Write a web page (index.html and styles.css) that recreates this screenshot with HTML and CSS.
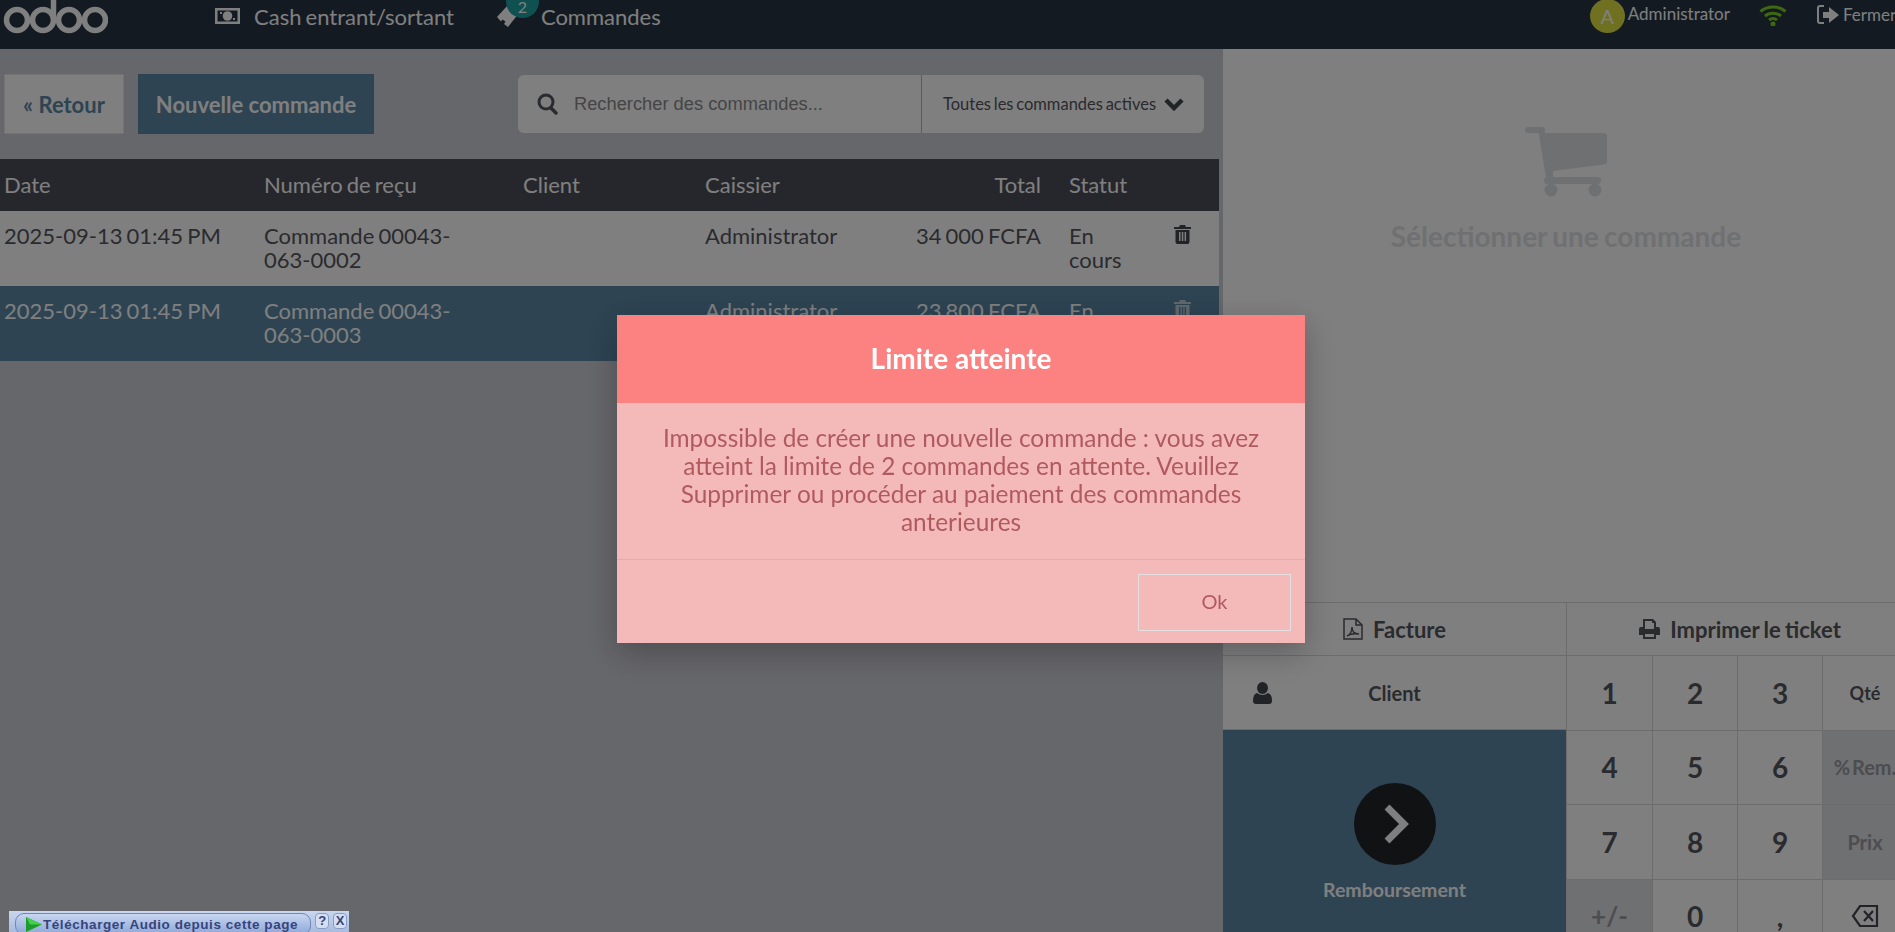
FILE: index.html
```html
<!DOCTYPE html>
<html lang="fr">
<head>
    <meta charset="UTF-8">
    <title>Point de vente</title>
    <link rel="stylesheet" href="styles.css">
</head>
<body>
    <div class="topbar">
        <svg class="logo" width="108" height="36" viewBox="0 0 108 36" fill="none" stroke="#fff" stroke-width="5.500">
            <circle cx="17" cy="20" r="10.500"/>
            <circle cx="43" cy="20" r="10.500"/>
            <path d="M53.500 20V-2"/>
            <circle cx="69" cy="20" r="10.500"/>
            <circle cx="95" cy="20" r="10.500"/>
        </svg>
        <div class="nav-item nav-cash">
            <svg width="25" height="16" viewBox="0 0 25 16"><path fill="#fff" fill-rule="evenodd" d="M0 0h25v16H0zM2.500 2.500v11h20v-11z"/><circle cx="12.500" cy="8" r="4.800" fill="#fff"/><rect x="5" y="4" width="2" height="2" fill="#fff"/><rect x="18" y="10" width="2" height="2" fill="#fff"/></svg>
            <span>Cash entrant/sortant</span>
        </div>
        <div class="nav-item nav-orders">
            <svg width="24" height="28" viewBox="0 0 24 28"><path fill="#fff" d="M1 15 12 3l5 3-1.500 3 3 1.500L20 8l3 3-11 14-4-3 1.500-2.500-3-2L5 19.500z"/></svg>
            <span class="badge">2</span>
            <span>Commandes</span>
        </div>
        <div class="user">
            <span class="avatar">A</span>
            <span>Administrator</span>
        </div>
        <svg class="wifi" width="28" height="22" viewBox="0 0 28 22" fill="none" stroke="#7ed321" stroke-width="3"><path d="M1.500 7.500c7-6 18-6 25 0"/><path d="M6 12c4.500-3.700 11.500-3.700 16 0"/><path d="M10 16c2.300-1.700 5.700-1.700 8 0"/><circle cx="14" cy="20" r="1" fill="#7ed321"/></svg>
        <div class="close-btn">
            <svg width="24" height="24" viewBox="0 0 24 24"><path fill="none" stroke="#fff" stroke-width="2" d="M8 3H4Q2 3 2 5v13q0 2 2 2h4"/><path fill="#fff" d="M7 9h6V4l10 8-10 8v-5H7z"/></svg>
            <span>Fermer</span>
        </div>
    </div>

    <div class="screen">
        <div class="orders">
            <div class="toolbar">
                <button class="btn btn-back">« Retour</button>
                <button class="btn btn-new">Nouvelle commande</button>
                <div class="search">
                    <div class="search-field">
                        <svg width="21" height="22" viewBox="0 0 21 22" fill="none" stroke="#555760" stroke-width="3"><circle cx="9" cy="9" r="7"/><path stroke-width="3.500" stroke-linecap="round" d="m14 15 5 5"/></svg>
                        <span class="placeholder">Rechercher des commandes...</span>
                    </div>
                    <div class="search-filter">
                        <span>Toutes les commandes actives</span>
                        <svg width="20" height="14" viewBox="0 0 20 14" fill="none" stroke="#44464e" stroke-width="4.500"><path d="m2 3 8 8 8-8"/></svg>
                    </div>
                </div>
            </div>

            <table class="order-table">
                <thead>
                    <tr>
                        <th class="c-date">Date</th>
                        <th class="c-num">Numéro de reçu</th>
                        <th class="c-client">Client</th>
                        <th class="c-cashier">Caissier</th>
                        <th class="c-total">Total</th>
                        <th class="c-status">Statut</th>
                        <th class="c-del"></th>
                    </tr>
                </thead>
                <tbody>
                    <tr>
                        <td>2025-09-13 01:45 PM</td>
                        <td class="c-num">Commande 00043-063-0002</td>
                        <td></td>
                        <td>Administrator</td>
                        <td class="c-total">34 000 FCFA</td>
                        <td class="c-status">En cours</td>
                        <td class="c-del"><svg class="trash" width="17" height="19" viewBox="0 0 17 19"><path d="M6 0h5l1 2h5v2H0V2h5zM1.500 5h14v12q0 2-2 2h-10q-2 0-2-2zM5 7v9h1.500V7zm2.800 0v9h1.500V7zM10.600 7v9h1.500V7z" fill-rule="evenodd"/></svg></td>
                    </tr>
                    <tr class="selected">
                        <td>2025-09-13 01:45 PM</td>
                        <td class="c-num">Commande 00043-063-0003</td>
                        <td></td>
                        <td>Administrator</td>
                        <td class="c-total">23 800 FCFA</td>
                        <td class="c-status">En cours</td>
                        <td class="c-del"><svg class="trash" width="17" height="19" viewBox="0 0 17 19"><path d="M6 0h5l1 2h5v2H0V2h5zM1.500 5h14v12q0 2-2 2h-10q-2 0-2-2zM5 7v9h1.500V7zm2.800 0v9h1.500V7zM10.600 7v9h1.500V7z" fill-rule="evenodd"/></svg></td>
                    </tr>
                </tbody>
            </table>
        </div>

        <div class="side">
            <div class="empty">
                <svg width="82" height="70" viewBox="0 0 82 70" fill="#dfe1e5"><rect x="0" y="0" width="20" height="6" rx="3"/><path d="M13 2h6l1 4h59q3 0 3 3v25q0 3-3 3.500L28 44v7h-7z"/><rect x="19" y="50" width="57" height="7" rx="3.500"/><circle cx="26" cy="63" r="6.500"/><circle cx="70" cy="63" r="6.500"/></svg>
                <div class="empty-text">Sélectionner une commande</div>
            </div>
            <div class="pads">
                <div class="actions">
                    <div class="action">
                        <svg width="20" height="22" viewBox="0 0 20 22" fill="none" stroke="#55565c" stroke-width="1.500"><path d="M1 1h12l6 6v14H1z"/><path d="M13 1v6h6"/><path d="M4 18c3-1 5-5 5-9 0 4 2 7 7 7-4-.500-9 0-12 2z"/></svg>
                        <span>Facture</span>
                    </div>
                    <div class="action">
                        <svg width="21" height="20" viewBox="0 0 21 20" fill="#55565c"><path fill-rule="evenodd" d="M4 0h10l3 3v5h2q2 0 2 2v6h-4v4H4v-4H0v-6q0-2 2-2h2zm2 2v8h9V4h-2V2zm0 13v3h9v-3z"/></svg>
                        <span>Imprimer le ticket</span>
                    </div>
                </div>
                <div class="controls">
                    <div class="left-pad">
                        <div class="client-btn">
                            <svg width="19" height="22" viewBox="0 0 19 22" fill="#44464e"><ellipse cx="9.500" cy="6" rx="5.500" ry="6"/><path d="M0 19q0-7 4-8 5.500 4 11 0 4 1 4 8 0 3-3 3H3q-3 0-3-3z"/></svg>
                            <span>Client</span>
                        </div>
                        <div class="pay-btn">
                            <div class="pay-circle">
                                <svg width="27" height="40" viewBox="0 0 27 40" fill="none" stroke="#fff" stroke-width="7"><path d="m4 3 17 17L4 37"/></svg>
                            </div>
                            <div class="pay-label">Remboursement</div>
                        </div>
                    </div>
                    <div class="numpad">
                        <div class="key">1</div><div class="key">2</div><div class="key">3</div><div class="key mode">Qté</div>
                        <div class="key">4</div><div class="key">5</div><div class="key">6</div><div class="key mode off rem">% Rem.</div>
                        <div class="key">7</div><div class="key">8</div><div class="key">9</div><div class="key mode off">Prix</div>
                        <div class="key off">+/-</div><div class="key">0</div><div class="key">,</div>
                        <div class="key"><svg width="28" height="24" viewBox="0 0 28 24" fill="none" stroke="#44464e" stroke-width="2.200"><path d="M9 2h17v20H9L2 12z"/><path d="m13 7 9 10m0-10-9 10"/></svg></div>
                    </div>
                </div>
            </div>
        </div>
    </div>

    <div class="backdrop"></div>

    <div class="popup">
        <div class="popup-title">Limite atteinte</div>
        <div class="popup-body">Impossible de créer une nouvelle commande : vous avez atteint la limite de 2 commandes en attente. Veuillez Supprimer ou procéder au paiement des commandes anterieures</div>
        <div class="popup-footer">
            <button class="popup-ok">Ok</button>
        </div>
    </div>

    <div class="audio-bar">
        <div class="audio-pill">
            <svg width="16" height="15" viewBox="0 0 16 15"><path fill="#1f9a2c" d="M0 0 16 7.500 0 15z"/><path fill="#3fd24a" d="M0 0 16 7.500H4z"/></svg>
            <span>Télécharger Audio depuis cette page</span>
        </div>
        <span class="audio-small">?</span>
        <span class="audio-small">X</span>
    </div>
</body>
</html>
```

FILE: styles.css
```css
* {
    box-sizing: border-box;
}

html, body {
    margin: 0;
    height: 100%;
    overflow: hidden;
}

body {
    font-family: Lato, "Noto Sans", sans-serif;
    color: #55565c;
    background-color: #cdced6;
}

/* top bar */
.topbar {
    height: 49px;
    background-color: #263444;
    color: #fff;
    display: flex;
    align-items: flex-start;
    overflow: hidden;
}

.logo {
    flex: none;
}

.nav-item {
    display: flex;
    align-items: center;
    gap: 14px;
    font-size: 22px;
    word-spacing: -1.500px;
    height: 32px;
    position: relative;
    white-space: nowrap;
}

.nav-cash {
    margin-left: 107px;
}

.nav-orders {
    margin-left: 42px;
    gap: 21px;
}

.badge {
    position: absolute;
    left: 10px;
    top: 0;
    width: 33px;
    height: 18px;
    line-height: 14px;
    text-align: center;
    font-size: 16px;
    color: #fff;
    background-color: #1ea0a0;
    border-radius: 0 0 17px 17px;
}

.user {
    margin-left: 929px;
    display: flex;
    align-items: flex-start;
    gap: 3px;
    font-size: 17px;
    line-height: 28px;
}

.avatar {
    width: 35px;
    height: 34px;
    margin-top: -1px;
    border-radius: 50%;
    background-color: #dee040;
    text-align: center;
    font-size: 20px;
    line-height: 35px;
}

.wifi {
    margin: 4px 0 0 29px;
    flex: none;
}

.close-btn {
    margin: 3px 0 0 29px;
    display: flex;
    gap: 3px;
    font-size: 17px;
    line-height: 24px;
    white-space: nowrap;
}

/* main area */
.screen {
    height: 883px;
    display: grid;
    grid-template-columns: 1223px 1fr;
}

.toolbar {
    height: 110px;
    padding: 25px 15px 0 4px;
    display: flex;
    align-items: flex-start;
}

.btn {
    height: 60px;
    font-family: inherit;
    font-size: 22px;
    font-weight: 700;
    border: 0;
    padding: 0;
}

.btn-back {
    width: 120px;
    background-color: #fff;
    color: #5c88a6;
    border: 1px solid #e6e6e6;
}

.btn-new {
    width: 236px;
    margin-left: 14px;
    background-color: #5c88a6;
    color: #fff;
}

.search {
    margin-left: 144px;
    margin-top: 1px;
    width: 686px;
    height: 58px;
    display: flex;
    background-color: #fff;
    border-radius: 6px;
}

.search-field {
    width: 404px;
    padding-left: 19px;
    display: flex;
    align-items: center;
    gap: 16px;
    border-right: 1px solid #b8b8b8;
}

.placeholder {
    font-family: "Liberation Sans", sans-serif;
    font-size: 18.300px;
    color: #8a8a8a;
}

.search-filter {
    flex: 1;
    padding-left: 21px;
    display: flex;
    align-items: center;
    gap: 8px;
    font-size: 16.500px;
    word-spacing: -1.500px;
    color: #55565c;
    white-space: nowrap;
}

/* orders table */
.order-table {
    width: 1219px;
    border-collapse: collapse;
    table-layout: fixed;
    font-size: 22px;
    word-spacing: -1.500px;
    line-height: 23.500px;
}

.order-table th {
    height: 52px;
    padding: 0 4px;
    background-color: #4c4e58;
    color: #fff;
    font-weight: 400;
    text-align: left;
}

.order-table td {
    padding: 13px 4px 15px;
    vertical-align: top;
    background-color: #fff;
}

.order-table .selected td {
    background-color: #5c88a6;
    color: #fff;
}

.c-date { width: 260px; }
.c-num { width: 259px; }
.c-client { width: 182px; }
.c-cashier { width: 189px; }

.order-table td.c-num {
    padding-right: 40px;
}

.order-table .c-total {
    width: 155px;
    text-align: right;
}

.order-table .c-status {
    width: 84px;
    padding-left: 24px;
}

.order-table .c-del {
    padding-left: 45px;
}

.trash {
    display: block;
    margin-top: 1px;
    fill: #44464e;
}

.selected .trash {
    fill: #fff;
    opacity: .6;
}

/* right side */
.side {
    background-color: #fff;
    display: flex;
    flex-direction: column;
    min-width: 0;
}

.empty {
    height: 553px;
    padding-top: 78px;
    text-align: center;
    width: 686px;
}

.empty svg {
    display: block;
    margin: 0 auto;
}

.empty-text {
    margin-top: 22px;
    font-size: 28px;
    font-weight: 700;
    word-spacing: -1.500px;
    line-height: 34px;
    color: #dfe1e5;
}

.pads {
    height: 330px;
    border-top: 1px solid #d8d8d8;
}

.actions {
    height: 53px;
    display: grid;
    grid-template-columns: 344px 1fr;
    border-bottom: 1px solid #d8d8d8;
}

.action {
    display: flex;
    align-items: center;
    justify-content: center;
    gap: 10px;
    font-size: 22px;
    font-weight: 700;
    word-spacing: -1px;
    border-right: 1px solid #d8d8d8;
}

.action:last-child {
    width: 346px;
    border-right: 0;
}

.controls {
    display: grid;
    grid-template-columns: 343px 1fr;
    height: 276px;
}

.left-pad {
    display: flex;
    flex-direction: column;
    overflow: hidden;
}

.client-btn {
    height: 74px;
    position: relative;
    display: flex;
    align-items: center;
    justify-content: center;
    font-size: 20px;
    font-weight: 700;
    border-bottom: 1px solid #d8d8d8;
}

.client-btn svg {
    position: absolute;
    left: 30px;
    top: 26px;
}

.pay-btn {
    flex: 1;
    background-color: #5c88a6;
    color: #fff;
    display: flex;
    flex-direction: column;
    align-items: center;
    padding-top: 53px;
}

.pay-circle {
    width: 82px;
    height: 82px;
    border-radius: 50%;
    background-color: #222428;
    display: flex;
    align-items: center;
    justify-content: center;
    padding-left: 3px;
}

.pay-label {
    margin-top: 13px;
    font-size: 19.500px;
    font-weight: 700;
    line-height: 24px;
}

.numpad {
    display: grid;
    grid-template-columns: 86px 85px 85px 85px;
    grid-auto-rows: 74.500px;
}

.key {
    display: flex;
    align-items: center;
    justify-content: center;
    font-size: 28px;
    font-weight: 700;
    border-left: 1px solid #d8d8d8;
    border-bottom: 1px solid #d8d8d8;
    white-space: nowrap;
}

.mode {
    font-size: 18px;
}

.off {
    background-color: #dfe0e4;
    color: #9a9ba0;
}

.off.mode {
    font-size: 20px;
}

.rem {
    word-spacing: -3px;
}

.key.off:not(.mode) {
    font-size: 26px;
}

/* overlay and popup */
.backdrop {
    position: fixed;
    inset: 0;
    background-color: rgba(0, 0, 0, .5);
}

.popup {
    position: fixed;
    left: 617px;
    top: 315px;
    width: 688px;
    height: 328px;
    background-color: #f4baba;
    color: #b05a5f;
    box-shadow: 0 10px 30px rgba(0, 0, 0, .25);
    display: flex;
    flex-direction: column;
}

.popup-title {
    height: 88px;
    line-height: 87px;
    background-color: #fc8181;
    color: #fff;
    text-align: center;
    font-size: 28px;
    font-weight: 700;
}

.popup-body {
    height: 157px;
    padding: 21px 40px 0;
    text-align: center;
    font-size: 24.400px;
    line-height: 28px;
    border-bottom: 1px solid #eba9ab;
}

.popup-footer {
    flex: 1;
    display: flex;
    justify-content: flex-end;
    padding: 14px 14px 0 0;
}

.popup-ok {
    width: 153px;
    height: 57px;
    padding: 0 0 3px;
    background: none;
    border: 1px solid #e6dfe2;
    font-family: inherit;
    font-size: 20px;
    color: #b05a5f;
}

/* audio download bar */
.audio-bar {
    position: fixed;
    left: 9px;
    bottom: 0;
    width: 340px;
    height: 21px;
    padding: 2px 2px 0 6px;
    display: flex;
    gap: 4px;
    background: linear-gradient(#c9d6ee, #a9bcdf);
    font-family: "Liberation Sans", sans-serif;
    font-weight: 700;
    color: #37447c;
}

.audio-pill {
    width: 298px;
    height: 22px;
    border: 1px solid #7088b8;
    border-radius: 9px;
    background: linear-gradient(#c8d6f0, #8ea8d8);
    display: flex;
    align-items: center;
    gap: 1px;
    padding-left: 10px;
    font-size: 13.500px;
    letter-spacing: .55px;
    white-space: nowrap;
}

.audio-small {
    width: 14px;
    height: 16px;
    border: 1px solid #8a9cc4;
    border-radius: 4px;
    background-color: #d5dff2;
    font-size: 13px;
    line-height: 14px;
    text-align: center;
}
```
